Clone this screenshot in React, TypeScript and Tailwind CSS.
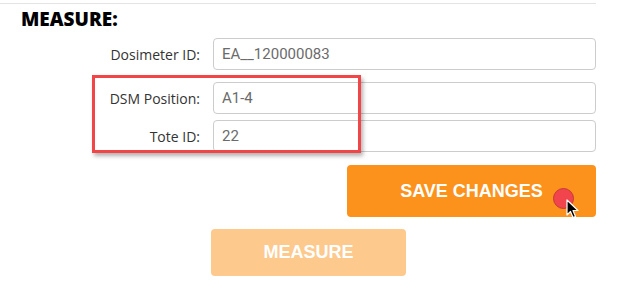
import React from 'react';

interface FieldRowProps {
  label: string;
  value: string;
  className?: string;
}

const FieldRow = ({ label, value, className = '' }: FieldRowProps) => (
  <div className={`flex items-center ${className}`}>
    <label className="w-[201px] pr-px text-right text-[14px] text-[#333] font-['Open_Sans',sans-serif]">
      {label}
    </label>
    <div className="ml-[12px] flex h-[32px] w-[383px] items-center rounded-[4px] border border-[#cccccc] bg-white px-[8px]">
      <span className="text-[15px] text-[#6b6b6b] font-['Roboto',sans-serif]">{value}</span>
    </div>
  </div>
);

export default function App() {
  return (
    <div className="relative h-[292px] w-[620px] overflow-hidden bg-white">
      <div className="w-[596px] pt-[3px]">
        <div className="border-t border-[#e3e3e3]" />

        <h2 className="mt-[3px] pl-[21px] text-[19px] leading-[24px] font-extrabold text-black font-['Open_Sans',sans-serif]">
          MEASURE:
        </h2>

        {/* Form */}
        <FieldRow className="mt-[7px]" label="Dosimeter ID:" value="EA__120000083" />
        <FieldRow className="mt-[12px]" label="DSM Position:" value="A1-4" />
        <FieldRow className="mt-[6px]" label="Tote ID:" value="22" />

        <div className="mt-[13px] flex justify-end">
          <button className="h-[52px] w-[249px] rounded-[4px] bg-[#fc921b] text-[18px] font-bold text-white font-['Liberation_Sans',sans-serif]">
            SAVE CHANGES
          </button>
        </div>

        <div className="mt-[12px] pl-[211px]">
          <button className="h-[47px] w-[195px] rounded-[4px] bg-[#fec98d] text-[18px] font-bold text-white font-['Liberation_Sans',sans-serif]">
            MEASURE
          </button>
        </div>
      </div>

      {/* Annotation highlight */}
      <div className="absolute left-[92px] top-[75px] h-[78px] w-[269px] border-[3px] border-[#f24548] shadow-[2px_3px_4px_rgba(0,0,0,0.3)]" />

      {/* Click marker + cursor */}
      <div className="absolute left-[553px] top-[188px] h-[21px] w-[21px] rounded-full border border-[#c23a3a] bg-[#f2444c]" />
      <svg className="absolute left-[566px] top-[199px]" width="13" height="20" viewBox="0 0 13 20">
        <path d="M1 1 L1 16 L4.5 12.5 L7 18.5 L9.5 17.5 L7 11.5 L12 11.5 Z" fill="#000" stroke="#fff" strokeWidth="1.2" strokeLinejoin="round" />
      </svg>
    </div>
  );
}
